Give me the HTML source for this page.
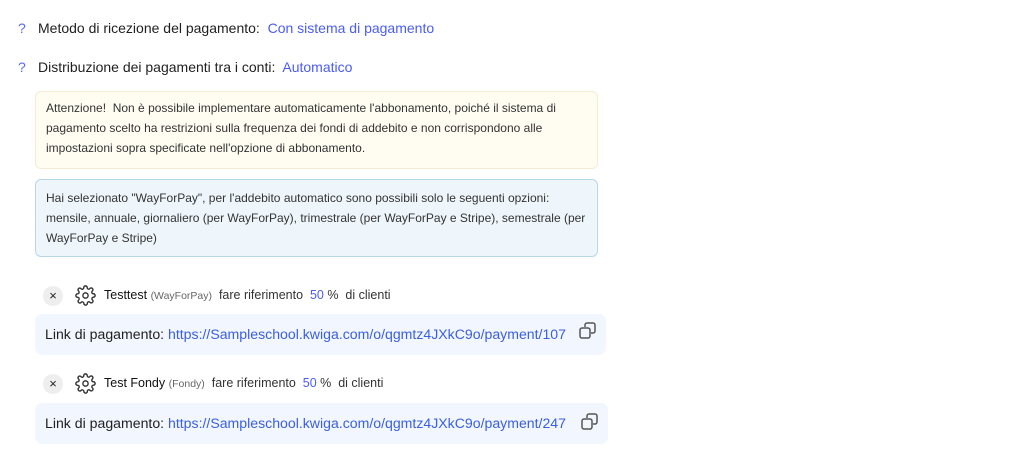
<!DOCTYPE html>
<html><head><meta charset="utf-8"><style>
*{margin:0;padding:0;box-sizing:border-box}
body{width:1019px;height:460px;background:#fff;font-family:"Liberation Sans",sans-serif;color:#1f1f1f;position:relative;overflow:hidden}
.a{position:absolute;white-space:nowrap}
.q{color:#5a6bf0;font-size:14px}
.row{font-size:14px}
.blue{color:#4a5cf0}
.box{position:absolute;left:35px;width:563px;border-radius:6px;font-size:12px;line-height:20px;padding:6px 10px 0 10px;color:#333}
.y{top:91px;height:78px;background:#fffcf2;border:1px solid #f6ecd2}
.b{top:179px;height:78px;background:#eef6fb;border:1px solid #b8d6ea;padding-top:8px}
.link{position:absolute;left:35px;height:41px;background:#f2f6fe;border-radius:7px;font-size:14.1px;padding-left:10px;line-height:41px;color:#1f1f1f}
.link a{color:#3a5fe0;text-decoration:none}
.x{position:absolute;width:20px;height:20px;border-radius:50%;background:#eeeeee;font-size:13px;line-height:20px;text-align:center;color:#222}
.it{font-size:12.5px;color:#333}
.it b{font-weight:normal;color:#111}
.sm{font-size:10.5px;color:#666}
</style></head><body>
<div class="a q" style="left:18px;top:20px">?</div>
<div class="a row" style="left:38px;top:20px">Metodo di ricezione del pagamento:&nbsp; <span class="blue">Con sistema di pagamento</span></div>
<div class="a q" style="left:18px;top:59px">?</div>
<div class="a row" style="left:38px;top:59px">Distribuzione dei pagamenti tra i conti:&nbsp; <span class="blue">Automatico</span></div>
<div class="box y">Attenzione!&nbsp; Non è possibile implementare automaticamente l'abbonamento, poiché il sistema di pagamento scelto ha restrizioni sulla frequenza dei fondi di addebito e non corrispondono alle impostazioni sopra specificate nell'opzione di abbonamento.</div>
<div class="box b">Hai selezionato "WayForPay", per l'addebito automatico sono possibili solo le seguenti opzioni: mensile, annuale, giornaliero (per WayForPay), trimestrale (per WayForPay e Stripe), semestrale (per WayForPay e Stripe)</div>

<div class="x" style="left:43px;top:286px">×</div>
<svg class="a" style="left:75px;top:285px" width="21" height="21" viewBox="0 0 24 24" fill="none" stroke="#333" stroke-width="1.6"><circle cx="12" cy="12" r="3"/><path d="M19.4 15a1.7 1.7 0 0 0 .3 1.8l.1.1a2 2 0 1 1-2.8 2.8l-.1-.1a1.7 1.7 0 0 0-1.8-.3 1.7 1.7 0 0 0-1 1.5V21a2 2 0 1 1-4 0v-.1a1.7 1.7 0 0 0-1.1-1.5 1.7 1.7 0 0 0-1.8.3l-.1.1a2 2 0 1 1-2.8-2.8l.1-.1a1.7 1.7 0 0 0 .3-1.8 1.7 1.7 0 0 0-1.5-1H3a2 2 0 1 1 0-4h.1a1.7 1.7 0 0 0 1.5-1.1 1.7 1.7 0 0 0-.3-1.8l-.1-.1a2 2 0 1 1 2.8-2.8l.1.1a1.7 1.7 0 0 0 1.8.3H9a1.7 1.7 0 0 0 1-1.5V3a2 2 0 1 1 4 0v.1a1.7 1.7 0 0 0 1 1.5 1.7 1.7 0 0 0 1.8-.3l.1-.1a2 2 0 1 1 2.8 2.8l-.1.1a1.7 1.7 0 0 0-.3 1.8V9a1.7 1.7 0 0 0 1.5 1H21a2 2 0 1 1 0 4h-.1a1.7 1.7 0 0 0-1.5 1z"/></svg>
<div class="a it" style="left:104px;top:288px"><b>Testtest</b> <span class="sm">(WayForPay)</span>&nbsp; fare riferimento&nbsp; <span class="blue">50</span> %&nbsp; di clienti</div>
<div class="link" style="top:314px;width:571px">Link di pagamento: <a>https://Sampleschool.kwiga.com/o/qgmtz4JXkC9o/payment/107</a></div>
<svg class="a" style="left:579px;top:322px" width="18" height="18" viewBox="0 0 18 18" fill="none" stroke="#555" stroke-width="1.5"><rect x="1" y="6" width="10" height="10" rx="2"/><path d="M6 5V3a2 2 0 0 1 2-2h6a2 2 0 0 1 2 2v6a2 2 0 0 1-2 2h-2"/></svg>

<div class="x" style="left:43px;top:374px">×</div>
<svg class="a" style="left:75px;top:373px" width="21" height="21" viewBox="0 0 24 24" fill="none" stroke="#333" stroke-width="1.6"><circle cx="12" cy="12" r="3"/><path d="M19.4 15a1.7 1.7 0 0 0 .3 1.8l.1.1a2 2 0 1 1-2.8 2.8l-.1-.1a1.7 1.7 0 0 0-1.8-.3 1.7 1.7 0 0 0-1 1.5V21a2 2 0 1 1-4 0v-.1a1.7 1.7 0 0 0-1.1-1.5 1.7 1.7 0 0 0-1.8.3l-.1.1a2 2 0 1 1-2.8-2.8l.1-.1a1.7 1.7 0 0 0 .3-1.8 1.7 1.7 0 0 0-1.5-1H3a2 2 0 1 1 0-4h.1a1.7 1.7 0 0 0 1.5-1.1 1.7 1.7 0 0 0-.3-1.8l-.1-.1a2 2 0 1 1 2.8-2.8l.1.1a1.7 1.7 0 0 0 1.8.3H9a1.7 1.7 0 0 0 1-1.5V3a2 2 0 1 1 4 0v.1a1.7 1.7 0 0 0 1 1.5 1.7 1.7 0 0 0 1.8-.3l.1-.1a2 2 0 1 1 2.8 2.8l-.1.1a1.7 1.7 0 0 0-.3 1.8V9a1.7 1.7 0 0 0 1.5 1H21a2 2 0 1 1 0 4h-.1a1.7 1.7 0 0 0-1.5 1z"/></svg>
<div class="a it" style="left:104px;top:376px"><b>Test Fondy</b> <span class="sm">(Fondy)</span>&nbsp; fare riferimento&nbsp; <span class="blue">50</span> %&nbsp; di clienti</div>
<div class="link" style="top:403px;width:573px">Link di pagamento: <a>https://Sampleschool.kwiga.com/o/qgmtz4JXkC9o/payment/247</a></div>
<svg class="a" style="left:581px;top:413px" width="18" height="18" viewBox="0 0 18 18" fill="none" stroke="#555" stroke-width="1.5"><rect x="1" y="6" width="10" height="10" rx="2"/><path d="M6 5V3a2 2 0 0 1 2-2h6a2 2 0 0 1 2 2v6a2 2 0 0 1-2 2h-2"/></svg>
</body></html>
